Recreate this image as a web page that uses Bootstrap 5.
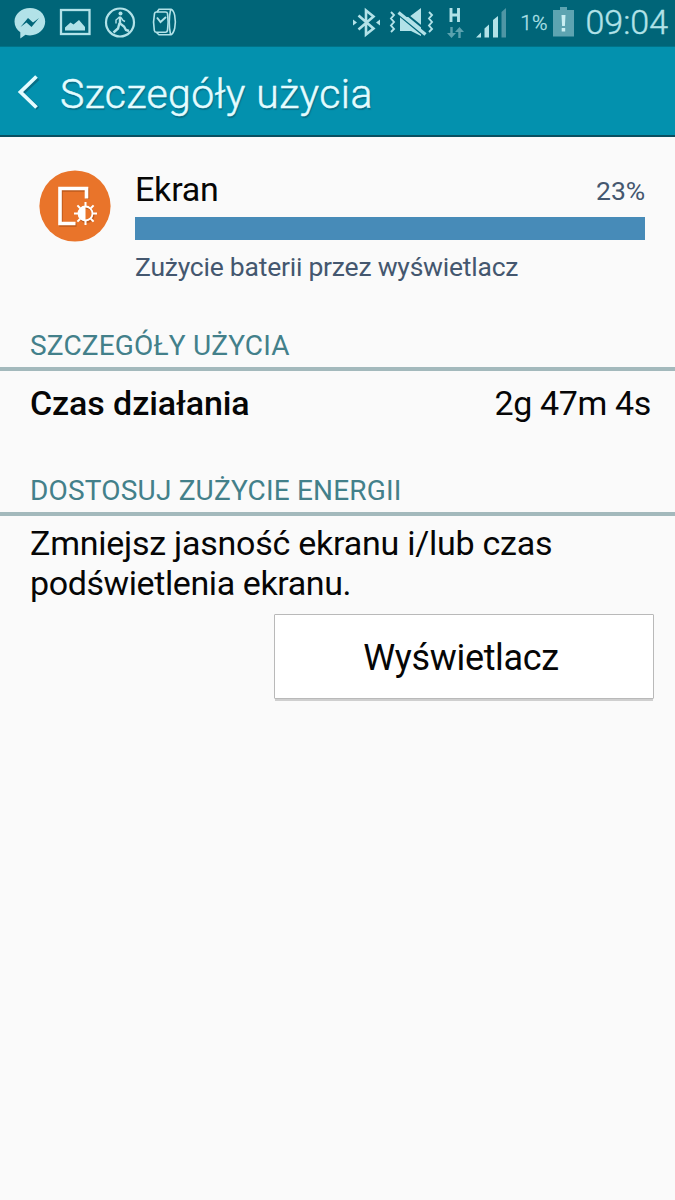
<!DOCTYPE html>
<html lang="pl">
<head>
<meta charset="utf-8">
<meta name="viewport" content="width=device-width, initial-scale=1">
<title>Szczegóły użycia</title>
<link href="https://cdn.jsdelivr.net/npm/bootstrap@5.3.0/dist/css/bootstrap.min.css" rel="stylesheet">
<style>
body{font-family:Roboto,"Noto Sans",sans-serif;background:#fafafa;color:#060606;min-height:1200px;overflow:hidden}
.status{height:47px;padding-right:7px;background:#006578;color:#b2e2e8;border-bottom:1px solid #007389}
.status svg,.titlebar svg,.app-icon{display:block;flex:none}
.pct{font-size:21px;font-weight:300;line-height:47px;-webkit-text-stroke:.3px}
.clock{font-size:34px;font-weight:300;line-height:45px;-webkit-text-stroke:.4px}
.titlebar{height:90px;background:#0391ae;color:#e4fcff;border-bottom:2px solid #0a4f60}
.titlebar h1{font-size:41px;font-weight:300;line-height:94px;height:88px;letter-spacing:.44px;-webkit-text-stroke:.5px;text-shadow:1px 2px 1px #086f87}
.item{padding:32px 30px 0 39px}
.item-body{margin-left:24px}
.name{font-size:34px;line-height:41px;height:40px;letter-spacing:-.2px}
.share{font-size:26.5px;line-height:40px;padding-top:2px;height:40px;letter-spacing:-.1px;color:#44576f}
.usage{height:23px;background:#dfe6ea;margin-top:8px}
.usage .progress-bar{background:#478bb8}
.desc{font-size:26.5px;line-height:36px;margin-top:9px;letter-spacing:-.23px;color:#44576f}
.section-title{height:46px;margin:40px 0 0;border-bottom:4px solid #a3b9bc;padding-left:30px;font-size:28px;line-height:41px;letter-spacing:.18px;color:#43808a;font-weight:400}
.runtime{height:64px;margin-bottom:-5px;padding:0 24px 0 30px;font-size:34px}
.runtime-label{font-weight:500;letter-spacing:-.1px}
.runtime-value{letter-spacing:-.35px}
.tip{font-size:34px;line-height:39.5px;letter-spacing:-.24px;padding:8px 30px 0}
.tip-end{letter-spacing:-.4px}
.open-btn{width:380px;height:85px;margin:11px 21px 0 0;padding:2px 6px 0 0;background:#fff;border:1px solid #b9b9b9;border-radius:1px;box-shadow:0 3px 0 -1px #cfcfcf;font-size:36px;letter-spacing:-.32px;color:#060606}
</style>
</head>
<body>
<header>
  <div class="status d-flex">
    <svg width="200" height="46" fill="none" stroke="#b2e2e8">
      <path d="M30 8c-8.500 0-15.500 6-15.500 13.600 0 4.600 2.300 8.300 5.800 10.700v6.200l5.200-3.700c1.400.4 3 .6 4.500.6 8.500 0 15.200-6 15.200-13.800S38.500 8 30 8z" fill="#b2e2e8" stroke="none"/>
      <path d="M20.500 27l7.500-9 5 4.500 6-4.500-7.500 9-5-4.500z" fill="#006578" stroke="none"/>
      <rect x="61" y="10" width="28.500" height="24" stroke-width="2.300"/>
      <path d="M65 30.500v-3l5.500-5 3 2 5.500-4.500 6 7v3.500z" fill="#b2e2e8" stroke="none"/>
      <circle cx="120" cy="22.500" r="14" stroke-width="2.200"/>
      <circle cx="120.500" cy="13.500" r="2" fill="#b2e2e8" stroke="none"/>
      <path d="M120 16.500v7l4 3 2 3.500 3 1M119.500 23l-1.500 5.500-4.500 4" stroke-width="2.400"/>
      <path d="M119.500 17l-3.500 3v3.500M121 17.500l2 3 2 1" stroke-width="1.400"/>
      <path d="M154.500 13.500q.3-1.500 2-1.500h9q1.800 0 2 1.500 1.200 8 0 17-.3 1.800-2 1.800h-9q-1.800 0-2.200-2-1.600-8.300.2-16.800z" stroke-width="1.600"/>
      <path d="M157 12l2-2.700h12q2.600 1 3.700 6 1.300 6.500 0 13-1.200 5-3.700 6.500h-12l-2.500-2.300M170.500 10q-2.500 12 0 24.500" stroke-width="1.600"/>
      <path d="M157 17.500l3.500 4.500 5.500-5" stroke-width="1.900"/>
    </svg>
    <svg class="ms-auto" width="170" height="46" viewBox="350 0 170 46" fill="none" stroke="#b2e2e8">
      <path d="M358.500 15.500l15 13-7.500 6v-24l7.500 6-15 13" stroke-width="2.600"/>
      <path d="M353 19.500l4 3-4 3zM380 19.500l-4 3 4 3z" fill="#b2e2e8" stroke="none"/>
      <path d="M400 17h9l12-9v28l-10-5h-11z" fill="#b2e2e8" stroke="none"/>
      <path d="M397 13.500l29 24M400 9l27 22" stroke="#006578" stroke-width="2"/>
      <path d="M398.500 12.500l27 22" stroke-width="3.400"/>
      <path d="M391 12l3 3-3 3.500 3 3.500-3 3.500 3 3.500-3 3M429 12l3 3-3 3.500 3 3.500-3 3.500 3 3.500-3 3" stroke-width="1.900"/>
      <path d="M451 8v14M458.500 8v14M451 15h7.500" stroke-width="2.900"/>
      <path d="M451.500 27v8M459.500 38v-8" stroke="#5ba2af" stroke-width="2.400"/>
      <path d="M447 33h9l-4.500 5zM455 32h9l-4.500-5z" fill="#5ba2af" stroke="none"/>
      <path d="M476 37.500l5-5v5zM484.500 37.500v-9l4.500-4v13zM493 37.500V20l5-4v21.500z" fill="#b2e2e8" stroke="none"/>
      <path d="M501.500 37.500V12l4.500-4v29.500z" fill="#4f96a5" stroke="none"/>
    </svg>
    <span class="pct">1%</span>
    <svg width="38" height="46" viewBox="547 0 38 46">
      <path d="M553 10h7V7h7v3h7v26.500h-21z" fill="#5da4b1"/>
      <path d="M561.500 15h4l-.6 11h-2.800zM561.700 28h3.500v3.500h-3.500z" fill="#c8eef2"/>
    </svg>
    <span class="clock">09:04</span>
  </div>
  <nav class="titlebar d-flex">
    <svg width="60" height="88" viewBox="0 47 60 88" fill="none" stroke-width="3.800">
      <path d="M38 78.500L22 93.500l16 15" stroke="#086f87"/>
      <path d="M36.500 76.500L20.500 92l16 15.500" stroke="#e4fcff"/>
    </svg>
    <h1 class="m-0">Szczegóły użycia</h1>
  </nav>
</header>
<main>
  <section class="item d-flex">
    <svg class="app-icon" width="72" height="76" viewBox="39 169 72 76" fill="none">
      <circle cx="75" cy="206" r="35.600" fill="#e9742a"/>
      <g transform="translate(1 1.500)" stroke="#bd5a1c"><path d="M75.500 223.500H60v-35h26.500v9" stroke-width="3.500"/><circle cx="85.500" cy="213.500" r="7" stroke-width="2"/></g>
      <path d="M75.500 223.500H60v-35h26.500v10" stroke="#fff" stroke-width="3.600"/>
      <circle cx="85.500" cy="213.500" r="7" stroke="#fff" stroke-width="1.800"/>
      <path d="M85.500 206.500a7 7 0 0 0 0 14z" fill="#fff"/>
      <path d="M85.500 202v4M85.500 221v4M74 213.500h4M93 213.500h4M77.400 205.400l2.800 2.800M90.800 218.800l2.800 2.800M77.400 221.600l2.800-2.800M90.800 208.200l2.800-2.800" stroke="#fff" stroke-width="2"/>
    </svg>
    <div class="item-body flex-grow-1">
      <div class="d-flex justify-content-between"><span class="name">Ekran</span><span class="share">23%</span></div>
      <div class="progress usage rounded-0"><div class="progress-bar w-100"></div></div>
      <div class="desc">Zużycie baterii przez wyświetlacz</div>
    </div>
  </section>
  <h2 class="section-title">SZCZEGÓŁY UŻYCIA</h2>
  <div class="runtime d-flex align-items-center justify-content-between"><span class="runtime-label">Czas działania</span><span class="runtime-value">2g 47m 4s</span></div>
  <h2 class="section-title">DOSTOSUJ ZUŻYCIE ENERGII</h2>
  <p class="tip mb-0">Zmniejsz jasność ekranu i/lub czas <span class="tip-end">podświetlenia ekranu.</span></p>
  <div class="d-flex justify-content-end"><button class="open-btn btn" type="button">Wyświetlacz</button></div>
</main>
<script src="https://cdn.jsdelivr.net/npm/bootstrap@5.3.0/dist/js/bootstrap.bundle.min.js"></script>
</body>
</html>
